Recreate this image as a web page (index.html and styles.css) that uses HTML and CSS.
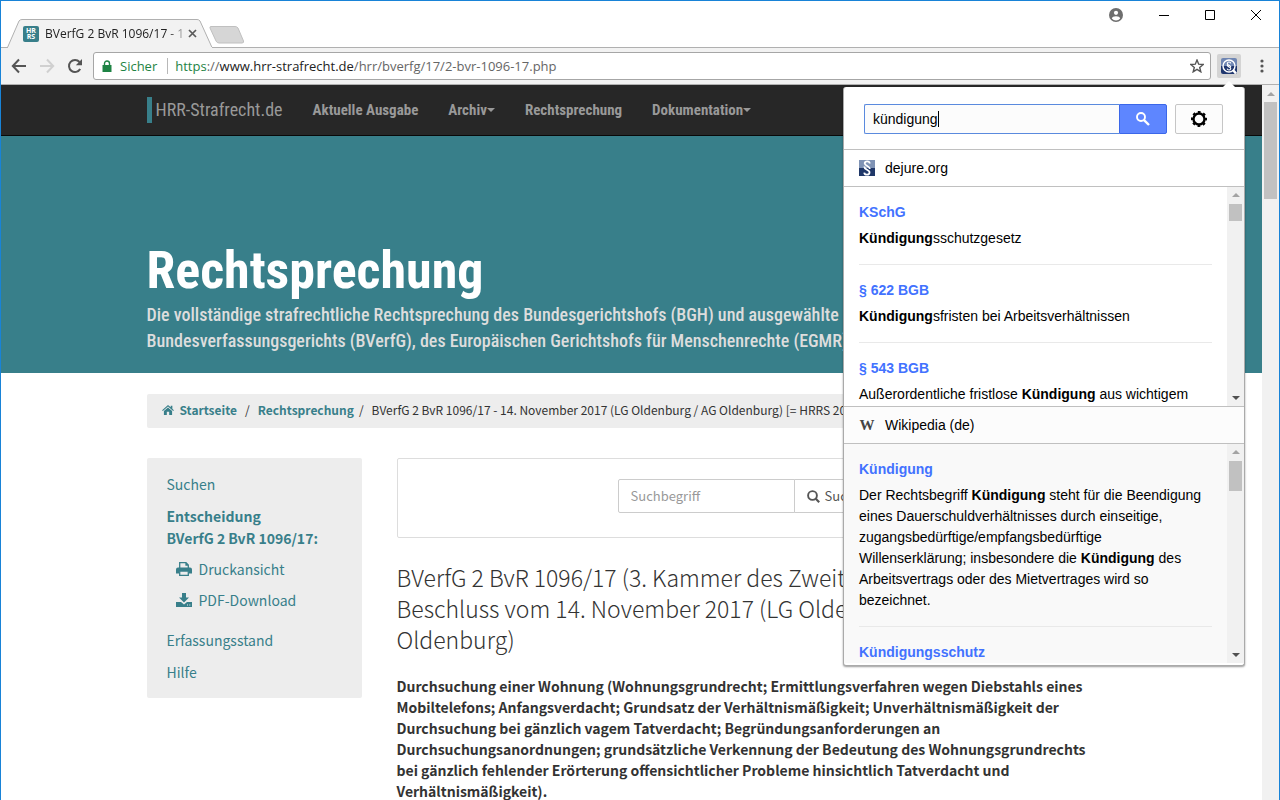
FILE: index.html
```html
<!DOCTYPE html>
<html lang="de">
<head>
<meta charset="utf-8">
<title>BVerfG 2 BvR 1096/17 - 14. November 2017</title>
<link rel="stylesheet" href="styles.css">
</head>
<body>
<div class="window">
  <header class="chrome">
    <div class="tabstrip">
      <div class="tab">
        <svg class="tab-shape" viewBox="0 0 212 29" width="212" height="29" aria-hidden="true"><path d="M0 28.500H6.500L18 2Q19 .5 21 .5H196Q198 .5 199 2L211 28.500" fill="#f2f2f2" stroke="#b0b0b0"/><path d="M7 28.500H211" stroke="#f2f2f2"/></svg>
        <span class="favicon"><span>HR</span><span>RS</span></span>
        <span class="tab-title">BVerfG 2 BvR 1096/17 - 1</span>
        <button class="plain tab-close" aria-label="Tab schließen"><svg width="9" height="9" viewBox="0 0 9 9"><path d="M1 1l7 7M8 1l-7 7" stroke="#5a5a5a" stroke-width="1.700"/></svg></button>
      </div>
      <button class="plain new-tab" aria-label="Neuer Tab"><svg width="36" height="18" viewBox="0 0 36 18"><path d="M2 .5H26Q28 .5 29 2L34.500 15Q35 17 33 17H10Q8 17 7 15L1 2Q.5 .5 2 .5Z" fill="#d6d6d6" stroke="#c0c0c0"/></svg></button>
      <div class="window-buttons">
        <button class="plain" aria-label="Profil"><svg width="14" height="14" viewBox="0 0 14 14"><circle cx="7" cy="7" r="7" fill="#6e6e6e"/><circle cx="7" cy="4.800" r="2.100" fill="#fff"/><path d="M2.800 10.500Q3.500 8.200 7 8.200T11.200 10.500Q9.500 12.500 7 12.500T2.800 10.500Z" fill="#fff"/></svg></button>
        <button class="plain" aria-label="Minimieren"><svg width="12" height="12" viewBox="0 0 12 12"><path d="M1 6.500H11" stroke="#000"/></svg></button>
        <button class="plain" aria-label="Maximieren"><svg width="12" height="12" viewBox="0 0 12 12"><path d="M1.500 1.500h9v9h-9z" fill="none" stroke="#000"/></svg></button>
        <button class="plain" aria-label="Schließen"><svg width="12" height="12" viewBox="0 0 12 12"><path d="M1 1l10 10M11 1L1 11" stroke="#000"/></svg></button>
      </div>
    </div>
    <div class="toolbar">
      <button class="plain" aria-label="Zurück"><svg width="16" height="16" viewBox="0 0 16 16"><path d="M8 1.500L1.800 8L8 14.500M2 8H15" fill="none" stroke="#555" stroke-width="2"/></svg></button>
      <button class="plain" aria-label="Vorwärts"><svg width="16" height="16" viewBox="0 0 16 16"><path d="M8 1.500L14.200 8L8 14.500M14 8H1" fill="none" stroke="#d0d0d0" stroke-width="2"/></svg></button>
      <button class="plain" aria-label="Neu laden"><svg width="16" height="16" viewBox="0 0 16 16"><path d="M13.200 11A6 6 0 1 1 12.500 4" fill="none" stroke="#555" stroke-width="2"/><path d="M15 1V7.200H8.800Z" fill="#555"/></svg></button>
      <div class="address">
        <svg width="10" height="12" viewBox="0 0 10 12" aria-hidden="true"><path d="M.5 5H9.500V12H.5Z" fill="#1e8344"/><path d="M2.500 5.500V3.500a2.500 2.500 0 0 1 5 0V5.500" fill="none" stroke="#1e8344" stroke-width="1.400"/></svg>
        <span class="secure">Sicher</span>
        <span class="url"><span class="scheme">https</span><span class="slashes">://</span>www.hrr-strafrecht.de<span class="path">/hrr/bverfg/17/2-bvr-1096-17.php</span></span>
        <button class="plain star" aria-label="Lesezeichen"><svg width="14" height="14" viewBox="0 0 14 14"><path d="M7 1L8.700 5.200L13.200 5.500L9.700 8.400L10.800 12.800L7 10.400L3.200 12.800L4.300 8.400L.8 5.500L5.300 5.200Z" fill="none" stroke="#555" stroke-width="1.400"/></svg></button>
      </div>
      <button class="plain extension" aria-label="Gesetzessuche"><svg width="16" height="16" viewBox="0 0 16 16"><path d="M0 8V2Q0 0 2 0H14Q16 0 16 2V8Z" fill="#6f86b3"/><path d="M0 8H16V14Q16 16 14 16H2Q0 16 0 14Z" fill="#20376f"/><circle cx="8" cy="8" r="6" fill="none" stroke="#fff" stroke-width="1.400"/><path d="M12 12l3 3.500" stroke="#fff" stroke-width="2.500"/><path d="M9.800 5.300Q9.500 4 8 4T6.300 5.500Q6.300 6.500 8 7.300T9.900 9.200M6.100 6.800Q6 8 8 9T9.700 10.600Q9.500 12 8 12T6.100 10.700" fill="none" stroke="#fff" stroke-width="1.100"/></svg></button>
      <button class="plain menu" aria-label="Menü"><svg width="4" height="14" viewBox="0 0 4 14"><circle cx="2" cy="2" r="1.600" fill="#555"/><circle cx="2" cy="7" r="1.600" fill="#555"/><circle cx="2" cy="12" r="1.600" fill="#555"/></svg></button>
    </div>
  </header>

  <div class="viewport">
    <div class="page">
      <nav class="navbar">
        <div class="container nav-inner">
          <a class="brand" href="#">HRR-Strafrecht.de</a>
          <a href="#">Aktuelle Ausgabe</a>
          <a href="#">Archiv<span class="caret"></span></a>
          <a href="#">Rechtsprechung</a>
          <a href="#">Dokumentation<span class="caret"></span></a>
        </div>
      </nav>
      <section class="hero">
        <div class="container">
          <h1>Rechtsprechung</h1>
          <p>Die vollständige strafrechtliche Rechtsprechung des Bundesgerichtshofs (BGH) und ausgewählte<br>Bundesverfassungsgerichts (BVerfG), des Europäischen Gerichtshofs für Menschenrechte (EGMR)</p>
        </div>
      </section>
      <div class="container">
        <nav class="breadcrumb" aria-label="Pfad">
          <a href="#"><svg width="12" height="10" viewBox="0 0 13 11" aria-hidden="true"><path d="M6.500 0L9.500 2.600V.8H11.300V4.200L13 5.700L12.200 6.600L6.500 1.700L.8 6.600L0 5.700Z" fill="#387f8a"/><path d="M6.500 2.700L11 6.500V11H7.800V7.500H5.200V11H2V6.500Z" fill="#387f8a"/></svg>Startseite</a>
          <span class="slash">/</span><a href="#">Rechtsprechung</a><span class="slash last">/</span>
          <span>BVerfG 2 BvR 1096/17 - 14. November 2017 (LG Oldenburg / AG Oldenburg) [= HRRS 2017</span>
        </nav>
        <div class="columns">
          <aside class="sidebar">
            <a href="#">Suchen</a>
            <a class="current" href="#">Entscheidung<br>BVerfG 2 BvR 1096/17:</a>
            <div class="actions">
              <a href="#"><svg width="16" height="14" viewBox="0 0 16 14" aria-hidden="true"><path d="M3.700 6V.7H10L12.300 3V6M10 .7V3H12.300" fill="none" stroke="#387f8a" stroke-width="1.300"/><path d="M2 5.500H14Q16 5.500 16 7.500V11.500H13V9H3V11.500H0V7.500Q0 5.500 2 5.500Z" fill="#387f8a"/><path d="M3.700 9V13.300H12.300V9Z" fill="#ededed" stroke="#387f8a" stroke-width="1.300"/></svg>Druckansicht</a>
              <a href="#"><svg width="16" height="14" viewBox="0 0 16 14" aria-hidden="true"><path d="M6 0H10V4.500H13L8 9.500L3 4.500H6Z" fill="#387f8a"/><path d="M0 9H5L8 11.500L11 9H16V14H0Z" fill="#387f8a"/><path d="M11 12H12M13.300 12H14.300" stroke="#ededed"/></svg>PDF-Download</a>
            </div>
            <a href="#">Erfassungsstand</a>
            <a href="#">Hilfe</a>
          </aside>
          <main class="content">
            <form class="searchbox">
              <input type="text" placeholder="Suchbegriff" aria-label="Suchbegriff"><button type="button"><svg width="13" height="13" viewBox="0 0 13 13" aria-hidden="true"><circle cx="5.500" cy="5.500" r="4.400" fill="none" stroke="#555" stroke-width="1.900"/><path d="M8.800 8.800l3.400 3.400" stroke="#555" stroke-width="2.200"/></svg>Suchen</button>
            </form>
            <h2>BVerfG 2 BvR 1096/17 (3. Kammer des Zweiten Senats) -<br>Beschluss vom 14. November 2017 (LG Oldenburg / AG<br>Oldenburg)</h2>
            <p class="summary">Durchsuchung einer Wohnung (Wohnungsgrundrecht; Ermittlungsverfahren wegen Diebstahls eines<br>Mobiltelefons; Anfangsverdacht; Grundsatz der Verhältnismäßigkeit; Unverhältnismäßigkeit der<br>Durchsuchung bei gänzlich vagem Tatverdacht; Begründungsanforderungen an<br>Durchsuchungsanordnungen; grundsätzliche Verkennung der Bedeutung des Wohnungsgrundrechts<br>bei gänzlich fehlender Erörterung offensichtlicher Probleme hinsichtlich Tatverdacht und<br>Verhältnismäßigkeit).</p>
          </main>
        </div>
      </div>
    </div>
    <div class="scrollbar page-scroll" aria-hidden="true"><span class="up"></span><span class="thumb"></span></div>
  </div>

  <section class="popup" aria-label="Suche">
    <form class="popup-search">
      <input type="text" value="kündigung" aria-label="Suche">
      <span class="cursor"></span>
      <button type="button" class="go" aria-label="Suchen"><svg width="14" height="14" viewBox="0 0 14 14"><circle cx="5" cy="5" r="4" fill="none" stroke="#fff" stroke-width="1.900"/><path d="M7.800 7.800l5.200 5.200" stroke="#fff" stroke-width="2.400"/></svg></button>
      <button type="button" class="settings" aria-label="Einstellungen"><svg width="16" height="16" viewBox="0 0 16 16"><circle cx="8" cy="8" r="5.500" fill="none" stroke="#000" stroke-width="2.400"/><circle cx="8" cy="8" r="7" fill="none" stroke="#000" stroke-width="2" stroke-dasharray="2.750 2.750" stroke-dashoffset="1.370"/></svg></button>
    </form>
    <h3 class="source"><svg width="16" height="16" viewBox="0 0 16 16" aria-hidden="true"><path d="M0 0H16V8H0Z" fill="#7f93b5"/><path d="M0 8H16V16H0Z" fill="#1f3768"/><path d="M10.800 3.500Q10.500 1.300 8.200 1.300T5.700 3.300Q5.700 4.700 8.200 6T10.900 9M5.300 6.500Q5.200 8.200 8 9.700T10.500 12.500Q10.500 14.700 8 14.700T5.200 12.600" fill="none" stroke="#fff" stroke-width="1.800"/></svg>dejure.org</h3>
    <div class="results">
      <ul>
        <li><a href="#">KSchG</a><p><b>Kündigung</b>sschutzgesetz</p></li>
        <li><a href="#">§ 622 BGB</a><p><b>Kündigung</b>sfristen bei Arbeitsverhältnissen</p></li>
        <li><a href="#">§ 543 BGB</a><p>Außerordentliche fristlose <b>Kündigung</b> aus wichtigem</p></li>
      </ul>
      <div class="scrollbar" aria-hidden="true"><span class="up"></span><span class="thumb short"></span><span class="down"></span></div>
    </div>
    <h3 class="source wiki"><span class="wiki-icon" aria-hidden="true">W</span>Wikipedia (de)</h3>
    <div class="results gray">
      <ul>
        <li><a href="#">Kündigung</a><p>Der Rechtsbegriff <b>Kündigung</b> steht für die Beendigung<br>eines Dauerschuldverhältnisses durch einseitige,<br>zugangsbedürftige/empfangsbedürftige<br>Willenserklärung; insbesondere die <b>Kündigung</b> des<br>Arbeitsvertrags oder des Mietvertrages wird so<br>bezeichnet.</p></li>
        <li><a href="#">Kündigungsschutz</a></li>
      </ul>
      <div class="scrollbar" aria-hidden="true"><span class="up"></span><span class="thumb medium"></span><span class="down"></span></div>
    </div>
  </section>
</div>
</body>
</html>
```
FILE: styles.css
```css
* { box-sizing: border-box; }
body {
  margin: 0;
  background: #fff;
  color: #333;
  font: 13px/20px "Noto Sans CJK SC", sans-serif;
}
h1, h2, h3, p, ul { margin: 0; padding: 0; }
ul { list-style: none; }
a { color: #387f8a; text-decoration: none; }
svg { display: block; flex: none; }
button, input { font: inherit; }
.plain { display: flex; align-items: center; justify-content: center; padding: 0; border: 0; background: none; }

.window {
  position: relative;
  display: flex;
  flex-direction: column;
  height: 100vh;
  overflow: hidden;
  border: 1px solid #1883d7;
  border-bottom: 0;
}

/* Browser frame */
.chrome { flex: none; color: #222; font: 12px/16px "Open Sans", sans-serif; }
.tabstrip { display: flex; height: 47px; border-bottom: 1px solid #b0b0b0; }
.tab { position: relative; display: flex; align-items: center; width: 212px; height: 29px; margin-top: 18px; padding: 0 18px 0 22px; }
.tab-shape { position: absolute; left: 0; top: 0; }
.favicon {
  position: relative;
  display: flex;
  flex-direction: column;
  align-items: center;
  justify-content: center;
  flex: none;
  width: 16px;
  height: 16px;
  border-radius: 2px;
  background: #387f8a;
  color: #fff;
  font: bold 7px/6px "Open Sans", sans-serif;
}
.tab-title {
  position: relative;
  flex: 1;
  margin-left: 6px;
  white-space: nowrap;
  -webkit-mask-image: linear-gradient(to right, #000 88%, transparent 105%);
  mask-image: linear-gradient(to right, #000 88%, transparent 105%);
}
.tab-close { position: relative; margin-left: 4px; }
.new-tab { align-self: flex-start; height: 18px; margin: 25px 0 0 -4px; }
.window-buttons { display: flex; align-items: center; gap: 34px; height: 28px; margin-left: auto; padding-right: 17px; }
.window-buttons .plain:first-child { margin-right: 1px; }
.toolbar {
  display: flex;
  align-items: center;
  height: 37px;
  padding: 0 15px 0 10px;
  border-bottom: 1px solid #b0b0b0;
  background: #f2f2f2;
}
.toolbar > .plain { width: 28px; padding-right: 12px; }
.address {
  display: flex;
  flex: 1;
  align-items: center;
  height: 28px;
  margin: 0 6px 0 -2px;
  padding: 0 6px 0 8px;
  border: 1px solid #a6a6a6;
  border-radius: 3px;
  background: #fff;
  font-size: 13px;
}
.secure { margin: 0 7px 0 8px; padding-right: 10px; border-right: 1px solid #b8b8b8; color: #1e8344; }
.url { flex: 1; }
.scheme { color: #1e8344; }
.slashes, .path { color: #666; }
.toolbar > .extension { width: 24px; height: 24px; padding: 0; border-radius: 2px; background: #d4d4d4; }
.toolbar > .menu { width: 4px; margin-left: 19px; padding: 0; }

/* Web page */
.viewport { display: flex; flex: 1; min-height: 0; }
.page { flex: 1; min-width: 0; overflow: hidden; }
.container { width: 100%; max-width: 970px; margin: 0 auto; }
.navbar { height: 51px; border-bottom: 1px solid #090909; background: #272727; }
.nav-inner { display: flex; align-items: center; gap: 30px; height: 50px; }
.nav-inner a { display: flex; align-items: center; color: #999; font: bold 15px/26px "Roboto Condensed", sans-serif; }
.nav-inner .brand { padding-left: 4px; border-left: 5px solid #387f8a; font-size: 18px; font-weight: normal; }
.caret { border: 4px solid transparent; border-top-color: #999; border-bottom: 0; }
.hero { height: 237px; padding-top: 101px; background: #387f8a; color: #ddd; }
.hero h1 { margin-bottom: -3px; color: #fff; font: bold 52px/68px "Roboto Condensed", sans-serif; }
.hero p { font: 500 18px/26px "Roboto Condensed", sans-serif; white-space: nowrap; }
.breadcrumb {
  display: flex;
  align-items: center;
  height: 34px;
  margin-top: 21px;
  padding: 0 15px 2px;
  overflow: hidden;
  border-radius: 2px;
  background: #ededed;
  font-size: 12px;
  white-space: nowrap;
}
.breadcrumb a { display: flex; align-items: center; gap: 6px; font-weight: bold; }
.slash { margin: 0 8px; }
.slash.last { margin-left: 5px; }
.columns { display: flex; gap: 35px; margin-top: 30px; }
.sidebar {
  display: flex;
  flex: none;
  flex-direction: column;
  gap: 10px;
  align-self: flex-start;
  width: 215px;
  padding: 15px 20px;
  border-radius: 2px;
  background: #ededed;
  font-size: 14px;
  line-height: 22px;
}
.current { font-weight: bold; }
.actions { display: flex; flex-direction: column; gap: 9px; margin: -1px 0 8px; padding-left: 9px; }
.actions a { display: flex; align-items: center; gap: 7px; }
.content { flex: 1; min-width: 0; }
.searchbox { display: flex; justify-content: center; align-items: center; height: 80px; padding-bottom: 4px; border: 1px solid #ddd; border-radius: 2px; }
.searchbox input { width: 177px; height: 34px; padding: 0 12px 2px; border: 1px solid #ccc; border-radius: 2px 0 0 2px; color: #555; }
.searchbox input::placeholder { color: #999; }
.searchbox button { display: flex; align-items: center; gap: 5px; width: 102px; height: 34px; margin-left: -1px; padding: 0 12px; border: 1px solid #ccc; border-radius: 0 2px 2px 0; background: #fff; color: #555; }
.content h2 { margin-top: 24px; font-size: 23px; font-weight: 300; line-height: 31px; white-space: nowrap; }
.summary { margin-top: 21px; font-size: 14px; font-weight: bold; line-height: 21px; white-space: nowrap; }

/* Drawn scrollbars */
.scrollbar { display: flex; flex: none; flex-direction: column; align-items: center; width: 17px; padding: 6px 0; background: #f1f1f1; }
.up { border: 4px solid transparent; border-top: 0; border-bottom-color: #a3a3a3; }
.down { margin-top: auto; border: 4px solid transparent; border-bottom: 0; border-top-color: #505050; }
.thumb { width: 13px; height: 97px; margin-top: 7px; background: #c1c1c1; }
.thumb.short { height: 17px; }
.thumb.medium { height: 30px; }
.page-scroll { padding-top: 7px; }
.page-scroll .thumb { margin-top: 6px; }

/* Extension popup */
.popup {
  position: absolute;
  top: 86px;
  right: 34px;
  width: 402px;
  padding-bottom: 2px;
  border: 1px solid #aaa;
  border-top: 0;
  border-radius: 3px;
  background: #fff;
  box-shadow: 0 1px 2px rgba(0, 0, 0, .4);
  color: #000;
  font: 14px/21px "Liberation Sans", sans-serif;
}
.popup::before { content: ""; position: absolute; top: -6px; right: 9px; border: 6px solid transparent; border-top: 0; border-bottom-color: #fff; }
.popup-search { position: relative; display: flex; padding: 17px 21px 15px 20px; }
.popup-search input { flex: 1; min-width: 0; height: 30px; padding: 0 8px; border: 1px solid #5a8ade; border-right: 0; border-radius: 2px 0 0 2px; background: #fcfcfc; color: #000; }
.cursor { position: absolute; left: 94px; top: 24px; width: 1px; height: 16px; background: #000; }
.popup-search button { display: flex; align-items: center; justify-content: center; width: 48px; height: 30px; padding: 0; border: 1px solid #c6c6c6; border-radius: 2px; background: #fcfcfc; }
.popup-search .go { margin-right: 8px; border-color: #3b67e9; border-radius: 0 2px 2px 0; background: #5e86ff; }
.source { display: flex; align-items: center; gap: 10px; height: 38px; padding: 0 15px; border: solid #c0c0c0; border-width: 1px 0; font-size: 14px; font-weight: normal; }
.source.wiki { background: #fcfcfc; }
.wiki-icon { width: 16px; color: #444; font: bold 15px/16px "Liberation Serif", serif; text-align: center; }
.results { display: flex; height: 219px; overflow: hidden; }
.results.gray { background: #f9f9f9; }
.results ul { flex: 1; padding: 15px; }
.results li + li { margin-top: 15px; padding-top: 15px; border-top: 1px solid #e9e9e9; }
.results a { display: block; color: #4272ff; font-weight: bold; }
.results p { margin-top: 5px; white-space: nowrap; }
```
